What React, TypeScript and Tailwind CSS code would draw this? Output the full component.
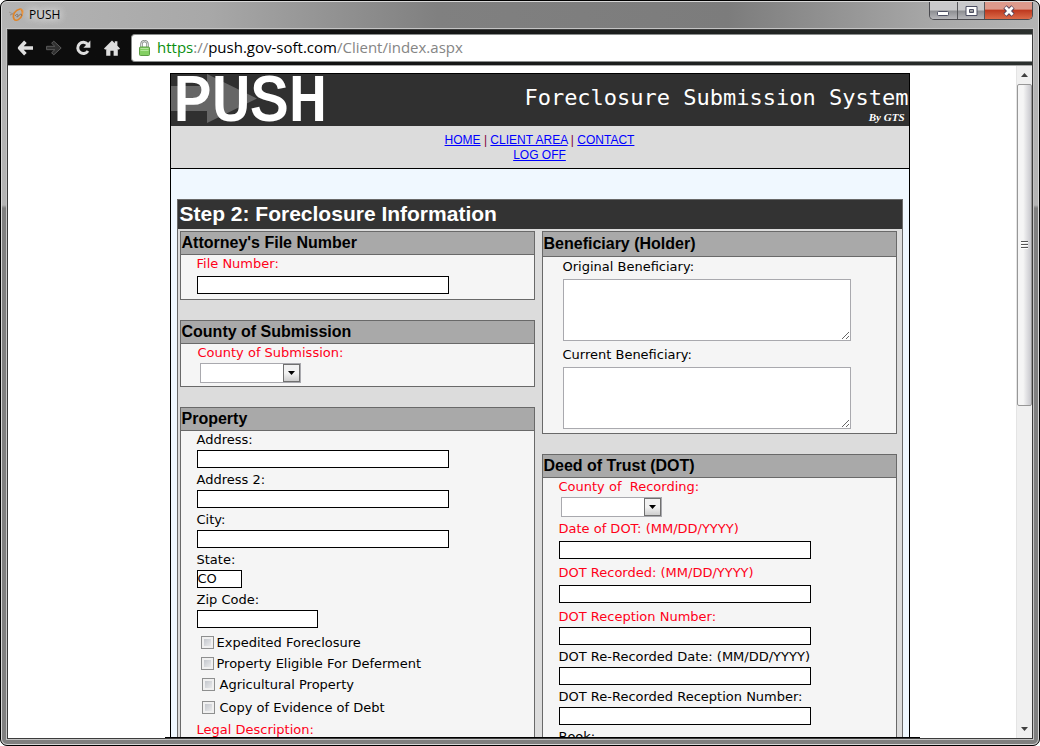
import type { ReactNode } from "react"
import clsx from "clsx"

const WindowButtons = () => {
    return (
        <div className="flex h-[18px] overflow-hidden rounded-b-[5px] border border-t-0 border-[#4a4a4f]">
            <button aria-label="Minimize" className="flex w-7 items-center justify-center border-r border-[#55565a] bg-linear-to-b from-[#c9c9cb] from-45% via-[#8f9094] via-55% to-[#b6b6ba]">
                <svg width="13" height="16" viewBox="0 0 13 16">
                    <rect x="0.5" y="8.5" width="11" height="4" rx="1" fill="#fff" stroke="#4d4f63" />
                </svg>
            </button>
            <button aria-label="Maximize" className="flex w-[27px] items-center justify-center border-r border-[#55565a] bg-linear-to-b from-[#c9c9cb] from-45% via-[#8f9094] via-55% to-[#b6b6ba]">
                <svg width="13" height="16" viewBox="0 0 13 16">
                    <path fillRule="evenodd" d="M1 3.5h11v9H1zM4.5 6.5h4v3h-4z" fill="#fff" stroke="#4d4f63" />
                </svg>
            </button>
            <button aria-label="Close" className="flex w-[47px] items-center justify-center bg-linear-to-b from-[#dd9a8c] from-40% via-[#bf3a20] via-50% to-[#dc6a48]">
                <svg width="14" height="16" viewBox="0 0 14 16">
                    <path d="M3 4l8 8M11 4l-8 8" stroke="#54425a" strokeWidth="4.6" />
                    <path d="M3.4 4.2l7.2 7.6M10.6 4.2l-7.2 7.6" stroke="#fff" strokeWidth="2.8" />
                </svg>
            </button>
        </div>
    )
}

const TitleBar = () => {
    return (
        <header className="flex h-[26px] shrink-0 items-start justify-between pl-[6px] pr-[5px]">
            <div className="flex h-[26px] items-center gap-[3px]">
                <svg width="18" height="16" viewBox="0 0 18 16" fill="none">
                    <path d="M1 5l4 2-3 1 5-3" stroke="#9a8f86" strokeWidth="0.8" />
                    <path d="M12 2c-5 1-8 6-6 10 2 3 7 0 8-4 1-3 0-6-2-6" stroke="#e08427" strokeWidth="1.6" />
                    <path d="M12 3c3-2 4 1 2 5" stroke="#ee9a45" strokeWidth="1" />
                    <path d="M7 9c1-2 3-2 3-1s-2 2-1 2 3-3 4-3 0 2 1 2" stroke="#7d6c60" strokeWidth="0.9" />
                </svg>
                <span className="font-['Open_Sans',sans-serif] text-xs text-black [text-shadow:0_0_8px_#fff,0_0_8px_#fff]">PUSH</span>
            </div>
            <WindowButtons />
        </header>
    )
}

const Toolbar = () => {
    return (
        <div className="flex h-9 shrink-0 items-center border-b border-[#a8a8a8] bg-linear-to-r from-[#0d0d0d] from-20% to-[#2b302e]">
            <div className="flex w-[123px] items-center gap-[13px] pl-[9px]">
                <button aria-label="Back">
                    <svg width="16" height="16" viewBox="0 0 16 16" fill="none" stroke="#dedede" strokeWidth="3.6">
                        <path d="M8.4 1.8L2.6 8l5.8 6.2M3 8h13" strokeLinejoin="round" />
                    </svg>
                </button>
                <button aria-label="Forward">
                    <svg width="16" height="16" viewBox="0 0 16 16">
                        <path d="M.6 6.3h8.2L5.6 3.2l2.2-2L15.2 8l-7.4 6.8-2.2-2 3.2-3.1H.6z" fill="#303030" stroke="#5c5c5c" />
                    </svg>
                </button>
                <button aria-label="Reload">
                    <svg width="16" height="16" viewBox="0 0 16 16" fill="none">
                        <path d="M12.6 4.2A5.6 5.6 0 1 0 13 11" stroke="#dedede" strokeWidth="3" />
                        <path d="M15.4.6v7.2H8.4z" fill="#dedede" />
                    </svg>
                </button>
                <button aria-label="Home">
                    <svg width="16" height="16" viewBox="0 0 16 16" fill="#dedede">
                        <path d="M8 .4l2.8 2.8V1.2h2.6v4.6L16 8.6l-1.2 1.2-1-.8v6.8H9.6v-5H6.4v5H2.2V9l-1 .8L0 8.6z" />
                    </svg>
                </button>
            </div>
            <div role="textbox" aria-label="Address bar" className="flex h-[28px] flex-1 items-center gap-[7px] rounded-l-[4px] border border-r-0 border-[#8a8d8c] bg-white pl-[7px] font-['Open_Sans',sans-serif] text-[15px] text-[#858585]">
                <svg width="11" height="16" viewBox="0 0 11 16">
                    <path d="M2.5 8V4a3 3 0 0 1 6 0v4" fill="none" stroke="#7f8580" strokeWidth="2.4" />
                    <path d="M2.5 8V4a3 3 0 0 1 6 0v4" fill="none" stroke="#dfe3df" strokeWidth="1" />
                    <rect x="0.5" y="7" width="10" height="8.5" rx="1" fill="#83cf62" stroke="#5c9c45" />
                    <path d="M1.5 8.5h8M1.5 10.5h8" stroke="#b4e79c" />
                </svg>
                <span>
                    <span className="text-[#0b8f10]">https</span>://<span className="text-black">push.gov-soft.com</span>/Client/index.aspx
                </span>
            </div>
        </div>
    )
}

const ScrollBar = () => {
    return (
        <div className="flex w-4 shrink-0 flex-col items-center border-l border-[#e4e4e4] bg-[#f0f0f0]">
            <button aria-label="Scroll up" className="flex h-[18px] items-center justify-center">
                <svg width="7" height="4" viewBox="0 0 7 4"><path d="M0 4l3.5-4L7 4z" fill="#404040" /></svg>
            </button>
            <div className="flex h-[322px] w-full flex-col items-center justify-center gap-px rounded-[2px] border border-[#979797] bg-linear-to-r from-[#f5f5f5] from-40% to-[#c8c8cd]">
                <span className="h-0.5 w-[7px] border-b border-white bg-[#555]" />
                <span className="h-0.5 w-[7px] border-b border-white bg-[#555]" />
                <span className="h-0.5 w-[7px] border-b border-white bg-[#555]" />
            </div>
            <button aria-label="Scroll down" className="mt-auto flex h-[18px] items-center justify-center">
                <svg width="7" height="4" viewBox="0 0 7 4"><path d="M0 0h7L3.5 4z" fill="#404040" /></svg>
            </button>
        </div>
    )
}

const Banner = () => {
    return (
        <div className="relative flex h-[52px] items-start justify-between bg-[#303030] pl-[3px] text-white">
            <svg className="absolute left-0 top-0" width="87" height="50" viewBox="0 0 87 50">
                <path d="M0 12h36V0l50 24.5L36 49V37H0z" fill="#666" />
            </svg>
            <h1 className="relative font-['Liberation_Mono',monospace] text-[64px] leading-[58px] [-webkit-text-stroke:2px_#fff]">PUSH</h1>
            <div className="flex flex-col items-end pt-3">
                <p className="font-['DejaVu_Sans_Mono',monospace] text-[22px] leading-6">Foreclosure Submission System</p>
                <p className="pr-1 font-['Liberation_Serif',serif] text-[11px] font-bold italic leading-[14px]">By GTS</p>
            </div>
        </div>
    )
}

const Nav = () => {
    return (
        <nav className="h-[43px] border-b border-black bg-[#dcdcdc] pt-[7px] text-center font-['Liberation_Sans',sans-serif] text-xs leading-[15px] text-[#800040]">
            <a href="#home" className="text-[#0000ff] underline">HOME</a>
            {" | "}
            <a href="#client" className="text-[#0000ff] underline">CLIENT AREA</a>
            {" | "}
            <a href="#contact" className="text-[#0000ff] underline">CONTACT</a>
            <br />
            <a href="#logoff" className="text-[#0000ff] underline">LOG OFF</a>
        </nav>
    )
}

type PanelProps = { title: string, tall?: boolean, className?: string, children: ReactNode }

const Panel = ({ title, tall, className, children }: PanelProps) => {
    return (
        <section className="border border-[#696969] bg-[#f5f5f5]">
            <h3 className={clsx("border-b border-[#696969] bg-[#a9a9a9] pl-px font-['Liberation_Sans',sans-serif] text-base font-bold", tall ? "leading-6" : "leading-[22px]")}>
                {title}
            </h3>
            <div className={clsx("flex flex-col items-start", className)}>{children}</div>
        </section>
    )
}

type FieldProps = { id: string, label: string, required?: boolean, loose?: boolean, width?: string, value?: string }

const Field = ({ id, label, required, loose, width = "w-[252px]", value }: FieldProps) => {
    return (
        <div className={clsx("flex flex-col items-start", loose ? "gap-[3px] pb-[5px]" : "gap-px pb-[3px]")}>
            <label htmlFor={id} className={clsx("whitespace-pre", required && "text-[#ff0019]")}>{label}</label>
            <input id={id} type="text" defaultValue={value} className={clsx("h-[18px] border border-black bg-white", width)} />
        </div>
    )
}

const SelectField = ({ id, label }: { id: string, label: string }) => {
    return (
        <div className="flex flex-col items-start gap-px pb-[3px]">
            <label htmlFor={id} className="whitespace-pre text-[#ff0019]">{label}</label>
            <div className="relative ml-0.5">
                <select id={id} className="block h-5 w-[101px] appearance-none border border-[#a9a9ae] bg-white">
                    <option></option>
                </select>
                <span className="pointer-events-none absolute right-px top-px flex h-[18px] w-[17px] items-center justify-center border border-[#707070] bg-linear-to-b from-[#f2f2f2] from-50% to-[#cfcfcf]">
                    <svg width="7" height="4" viewBox="0 0 7 4"><path d="M0 0h7L3.5 4z" fill="#000" /></svg>
                </span>
            </div>
        </div>
    )
}

const AreaField = ({ id, label }: { id: string, label: string }) => {
    return (
        <div className="flex flex-col gap-[3px]">
            <label htmlFor={id}>{label}</label>
            <textarea id={id} className="block h-[62px] w-[288px] border border-[#a9a9ae] bg-white" />
        </div>
    )
}

const CheckField = ({ label, className }: { label: string, className: string }) => {
    return (
        <label className={clsx("flex items-center", className)}>
            <input type="checkbox" className="size-[13px] appearance-none border border-[#8e8f8f] bg-linear-to-br from-[#b9bdc4] to-[#f4f4f4] shadow-[inset_0_0_0_2px_#f0f0f0]" />
            {label}
        </label>
    )
}

const ForeclosureForm = () => {
    return (
        <form className="mx-1.5 mt-[30px] border border-[#696969] bg-[#dcdcdc] font-['DejaVu_Sans',sans-serif] text-[13px] leading-[18px] text-black">
            <h2 className="bg-[#333] pb-0.5 pl-0.5 font-['Liberation_Sans',sans-serif] text-[21px] font-bold leading-[27px] text-white">
                Step 2: Foreclosure Information
            </h2>
            <div className="flex gap-[7px] pl-0.5 pr-[5px] pt-0.5">
                <div className="flex flex-1 flex-col gap-5">
                    <Panel title="Attorney's File Number" className="pl-4">
                        <Field id="file" label="File Number:" required loose />
                    </Panel>
                    <Panel title="County of Submission" className="pl-[17px]">
                        <SelectField id="county" label="County of Submission:" />
                    </Panel>
                    <Panel title="Property" className="pl-4">
                        <Field id="address" label="Address:" />
                        <Field id="address2" label="Address 2:" />
                        <Field id="city" label="City:" />
                        <Field id="state" label="State:" width="w-[45px]" value="CO" />
                        <Field id="zip" label="Zip Code:" width="w-[121px]" />
                        <CheckField label="Expedited Foreclosure" className="mt-px h-[21px] gap-[3px] pl-1" />
                        <CheckField label="Property Eligible For Deferment" className="h-[21px] gap-[3px] pl-1" />
                        <CheckField label="Agricultural Property" className="h-[21px] gap-[5px] pl-[5px]" />
                        <CheckField label="Copy of Evidence of Debt" className="h-[25px] gap-[5px] pl-[5px]" />
                        <label htmlFor="legal" className="pt-px text-[#ff0019]">Legal Description:</label>
                        <textarea id="legal" className="h-[62px] w-[288px] border border-[#a9a9ae] bg-white" />
                    </Panel>
                </div>
                <div className="flex flex-1 flex-col gap-5">
                    <Panel title="Beneficiary (Holder)" tall className="gap-[5px] pb-1 pl-5 pt-px">
                        <AreaField id="original" label="Original Beneficiary:" />
                        <AreaField id="current" label="Current Beneficiary:" />
                    </Panel>
                    <Panel title="Deed of Trust (DOT)" className="pl-4">
                        <SelectField id="recording" label="County of  Recording:" />
                        <Field id="dot-date" label="Date of DOT: (MM/DD/YYYY)" required loose />
                        <Field id="dot-recorded" label="DOT Recorded: (MM/DD/YYYY)" required loose />
                        <Field id="dot-reception" label="DOT Reception Number:" required />
                        <Field id="rerecorded-date" label="DOT Re-Recorded Date: (MM/DD/YYYY)" />
                        <Field id="rerecorded-reception" label="DOT Re-Recorded Reception Number:" />
                        <Field id="book" label="Book:" />
                    </Panel>
                </div>
            </div>
        </form>
    )
}

const App = () => {
    return (
        <div className="h-screen bg-white">
            <div className="h-full overflow-hidden rounded-[7px] border border-black bg-[#808080]">
                <div className="flex h-full flex-col rounded-[6px] border border-[#d8d8d8] bg-[linear-gradient(to_bottom,transparent_203px,#808080_206px),linear-gradient(to_right,#b4b4b4,#a8a8a8_20%,#808080_42%,#7c7c7c_70%,#a8a8a8_90%,#b4b4b4)]">
                    <TitleBar />
                    <div className="mx-1 mb-1 flex min-h-0 flex-1 flex-col border border-[#c4c4c4]">
                        <div className="flex min-h-0 flex-1 flex-col border border-[#3c3c3c] bg-white">
                            <Toolbar />
                            <div className="flex min-h-0 flex-1">
                                <div className="flex min-w-0 flex-1 flex-col">
                                    <main className="min-h-0 flex-1 overflow-hidden pl-[55px] pt-[7px]">
                                        <div className="mx-auto w-[740px] border border-black bg-[#f0f8ff]">
                                            <Banner />
                                            <Nav />
                                            <ForeclosureForm />
                                        </div>
                                    </main>
                                    <div className="ml-[157px] mr-24 h-px shrink-0 bg-black" />
                                </div>
                                <ScrollBar />
                            </div>
                        </div>
                    </div>
                </div>
            </div>
        </div>
    )
}

export default App
